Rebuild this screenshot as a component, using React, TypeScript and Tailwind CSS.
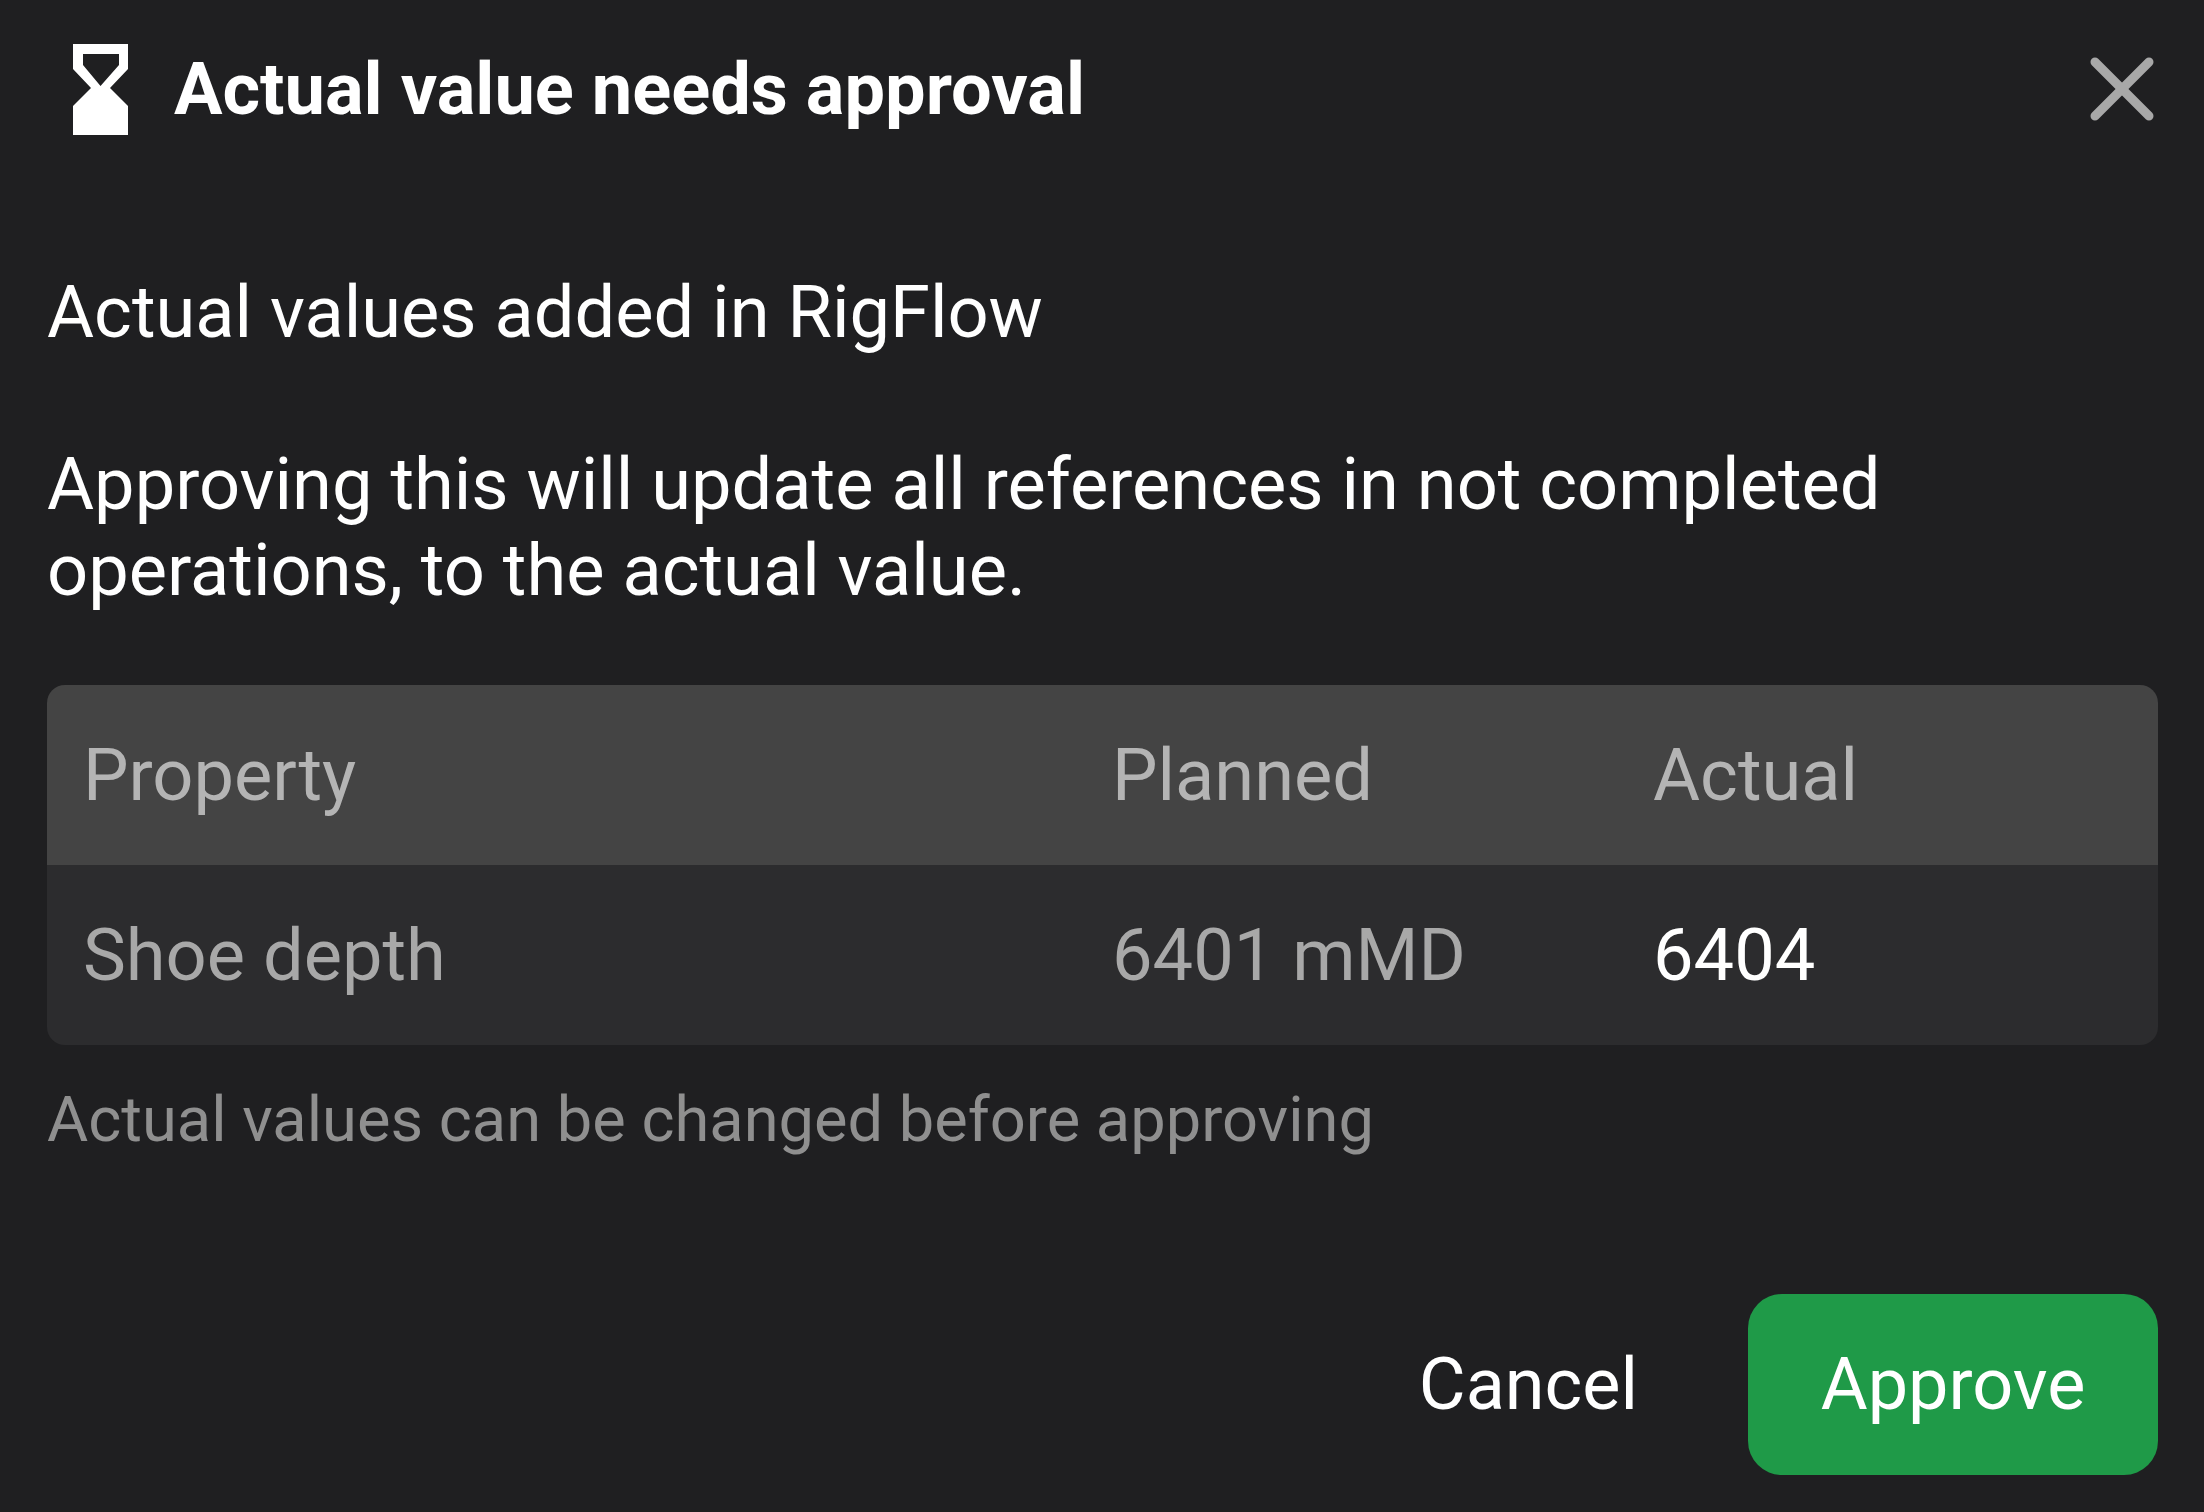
import { X } from 'lucide-react';

function Hourglass() {
  return (
    <svg viewBox="0 0 55 91" className="w-[55px] h-[91px]" fill="white">
      <path
        fillRule="evenodd"
        d="M0 0H55V25L37 44L55 62V91H0V62L18 44L0 25ZM10 10V21L27.5 42L46 21V10Z"
      />
    </svg>
  );
}

export default function App() {
  return (
    <div className="h-screen bg-[#1f1f21] text-white font-['Roboto',sans-serif] flex flex-col pl-[47px] pr-[46px] pt-[43px] pb-[37px]">
      <div className="flex items-center justify-between h-[92px]">
        <div className="flex items-center gap-[46px] pl-[26px]">
          <Hourglass />
          <h1 className="text-[72.2px] leading-[92px] font-bold pt-[2px]">Actual value needs approval</h1>
        </div>
        <button className="text-[#a8a8a8] -mr-[18px]">
          <X size={108} strokeWidth={2} />
        </button>
      </div>

      <p className="text-[72.2px] leading-[86px] mt-[135px]">Actual values added in RigFlow</p>
      <p className="text-[72.2px] leading-[86px] mt-[86px]">
        Approving this will update all references in not completed
        <br />
        operations, to the actual value.
      </p>

      <div className="mt-[71px] rounded-[18px] overflow-hidden text-[72.2px]">
        <div className="grid grid-cols-[1029px_541px_1fr] pl-[36px] pt-[2px] h-[180px] items-center bg-[#444444] text-[#b4b4b4]">
          <span>Property</span>
          <span>Planned</span>
          <span>Actual</span>
        </div>
        <div className="grid grid-cols-[1029px_541px_1fr] pl-[36px] pt-[2px] h-[180px] items-center bg-[#2c2c2e] text-[#a8a8a8]">
          <span>Shoe depth</span>
          <span>6401 mMD</span>
          <span className="text-white">6404</span>
        </div>
      </div>

      <p className="text-[63.2px] leading-[80px] mt-[34px] text-[#8f8f8f]">Actual values can be changed before approving</p>

      <div className="mt-auto flex justify-end items-center gap-[110px]">
        <button className="text-[72px]">Cancel</button>
        <button className="w-[410px] h-[181px] rounded-[34px] bg-[#1f9a48] text-[72px]">Approve</button>
      </div>
    </div>
  );
}
